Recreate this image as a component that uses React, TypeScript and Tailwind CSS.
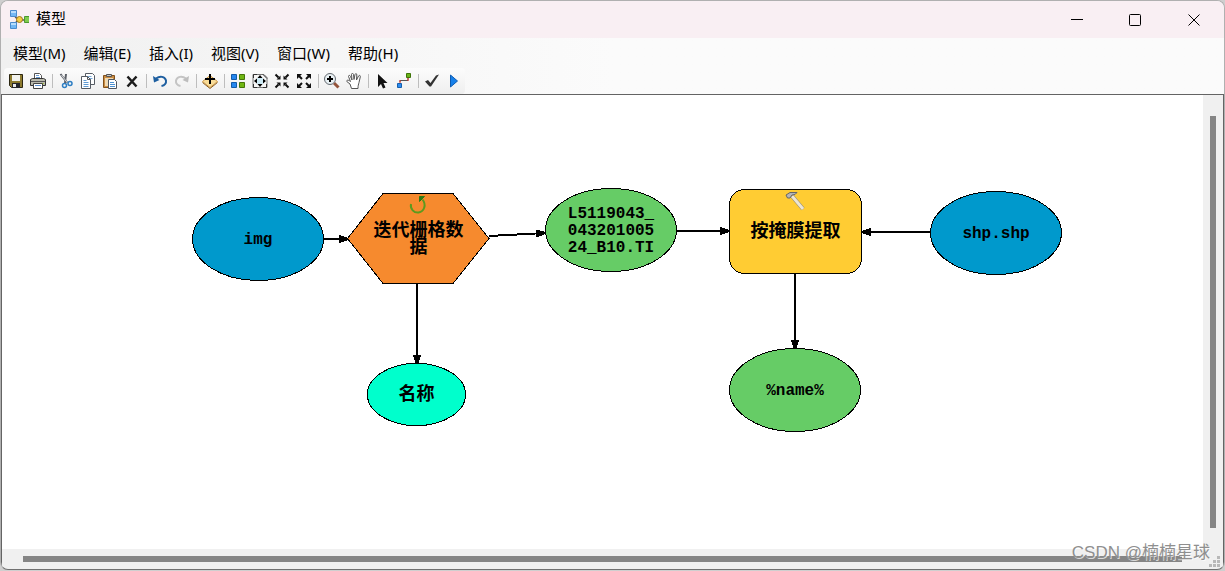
import React from "react";

const menus = ["模型(M)", "编辑(E)", "插入(I)", "视图(V)", "窗口(W)", "帮助(H)"];

const tools: { label: string; art: React.ReactNode }[][] = [
  [
    {
      label: "保存",
      art: (
        <>
          <path d="M1.500 1.500h13v13h-11l-2-2z" fill="#8c7a2e" stroke="#2b2612" />
          <path d="M4 2h8v6H4z" fill="#f3f3ee" />
          <path d="M4 10h8v5H4z" fill="#26262a" />
          <path d="M5 11h3v3H5z" fill="#e8e8e8" />
        </>
      ),
    },
    {
      label: "打印",
      art: (
        <>
          <path d="M4.500 6V.5h5l2 2V6" fill="#fff" stroke="#555" />
          <path d="M6 2.500h3M6 4.500h4" stroke="#6b9bd0" />
          <path d="M.5 6.500l2-1h11l2 1v6H.5z" fill="#b9b9ac" stroke="#333" />
          <path d="M1 8.500h14" stroke="#555" />
          <path d="M12 10.500h2" stroke="#a6c83a" />
          <path d="M3.500 10.500h9v5h-9z" fill="#fff" stroke="#444" />
          <path d="M5 12.500h6" stroke="#5a8fd0" />
        </>
      ),
    },
  ],
  [
    {
      label: "剪切",
      art: (
        <>
          <path d="M2.500 1l7 9M8 1l-1 9" stroke="#5b5f66" strokeWidth="2" />
          <path d="M3.500 2l6 8" stroke="#d5d8dc" />
          <circle cx="6.500" cy="12.500" r="2" fill="none" stroke="#2f7fc4" strokeWidth="1.500" />
          <circle cx="12" cy="10.500" r="2" fill="none" stroke="#2f7fc4" strokeWidth="1.500" />
        </>
      ),
    },
    {
      label: "复制",
      art: (
        <>
          <path d="M5.500.500h7l2 2v9h-9z" fill="#fff" stroke="#555b63" />
          <path d="M7.500 3.500h4M7.500 5.500h5" stroke="#79a9d8" />
          <path d="M1.500 3.500h6l3 3v9h-9z" fill="#fff" stroke="#555b63" />
          <path d="M7.500 3.500v3h3" fill="none" stroke="#555b63" />
          <path d="M3.500 7.500h3M3.500 9.500h5M3.500 11.500h5M3.500 13.500h5" stroke="#5f9bd4" />
        </>
      ),
    },
    {
      label: "粘贴",
      art: (
        <>
          <path d="M1.500 2.500h11v12h-11z" fill="#c98c42" stroke="#80501b" />
          <path d="M4.500 1.500h5v2h-5z" fill="#c9c9c9" stroke="#555" />
          <path d="M3 5h8v8H3z" fill="#eed9b3" />
          <path d="M6.500 6.500h6l2 2v7h-8z" fill="#fff" stroke="#4e5660" />
          <path d="M8 9.500h4M8 11.500h5M8 13.500h5" stroke="#4d91d2" />
        </>
      ),
    },
    {
      label: "删除",
      art: <path d="M3.500 3.500l9 10M12.500 3.500l-9 10" stroke="#1c1c1c" strokeWidth="2.500" />,
    },
  ],
  [
    {
      label: "撤消",
      art: (
        <>
          <path d="M4 5.500c4-3 9-2 10 2 .5 3-1.500 5-4.500 5.500" fill="none" stroke="#1e5fa0" strokeWidth="2" />
          <path d="M1 3l1 6.500 5.500-2.500z" fill="#1e5fa0" />
        </>
      ),
    },
    {
      label: "恢复",
      art: (
        <>
          <path d="M12 5.500c-4-3-9-2-10 2-.5 3 1.500 5 4.500 5.500" fill="none" stroke="#c4c4c4" strokeWidth="2" />
          <path d="M15 3l-1 6.500-5.500-2.500z" fill="#bdbdbd" />
        </>
      ),
    },
  ],
  [
    {
      label: "添加数据",
      art: (
        <>
          <path d="M.500 8.500L8 2.500l7.500 6L8 14.500z" fill="#f8dc98" stroke="#d09a48" />
          <path d="M.500 9.500l7.500 6 7.500-6" fill="none" stroke="#8c6226" />
          <path d="M8 1v10M3 6h10" stroke="#000" strokeWidth="2" />
        </>
      ),
    },
  ],
  [
    {
      label: "自动布局",
      art: (
        <>
          <path d="M1.500 1.500h5v5h-5zM1.500 9.500h5v5h-5z" fill="#2587ee" stroke="#145aa8" />
          <path d="M9.500 1.500h5v5h-5zM9.500 9.500h5v5h-5z" fill="#70b613" stroke="#447509" />
        </>
      ),
    },
    {
      label: "全图",
      art: (
        <>
          <path d="M1 1.500h11l3 3v10H1z" fill="#f7f7f7" stroke="#777" />
          <path d="M1.500 5V1.500H5M11 1.500l4 4M1.500 11v3.500H5M14.500 11v3.500H11" fill="none" stroke="#333" />
          <path d="M5 5h6v6H5z" fill="#cdeaf5" />
          <path d="M8 2l2.500 3h-5zM8 14l2.500-3h-5zM2 8l3-2.500v5zM14 8l-3-2.500v5z" fill="#000" />
        </>
      ),
    },
    {
      label: "固定比例缩小",
      art: (
        <>
          <path d="M1.500 1.500l3 3M14.500 1.500l-3 3M1.500 14.500l3-3M14.500 14.500l-3-3" stroke="#111" strokeWidth="2" />
          <path d="M6.500 2.500v4h-4zM9.500 2.500v4h4zM6.500 13.500v-4h-4zM9.500 13.500v-4h4z" fill="#111" />
        </>
      ),
    },
    {
      label: "固定比例放大",
      art: (
        <>
          <path d="M3 3l3 3M13 3l-3 3M3 13l3-3M13 13l-3-3" stroke="#111" strokeWidth="2" />
          <path d="M1 1h5L1 6zM15 1h-5l5 5zM1 15h5l-5-5zM15 15h-5l5-5z" fill="#111" />
        </>
      ),
    },
  ],
  [
    {
      label: "放大",
      art: (
        <>
          <path d="M10 10l4.500 4.500" stroke="#94543b" strokeWidth="3" />
          <circle cx="6" cy="6" r="5.500" fill="#e9f1f4" stroke="#646a70" />
          <path d="M6 3v6M3 6h6" stroke="#000" strokeWidth="2" />
        </>
      ),
    },
    {
      label: "平移",
      art: (
        <path
          d="M5.500 15.500L4 11 .800 8.500C.500 7 2 6.500 4.500 8.500L2.500 3.500c0-1.500 1.500-1.500 2 0L6 7 5.500 1.500c0-1.500 1.800-1.500 2 0L8 6.500l1-5c.5-1.500 2-1 1.800.500L10.500 7l2-4c.8-1.200 2.200-.5 1.800.800L13 9.500c-.5 2-1 3-1 6z"
          fill="#fff"
          stroke="#555"
        />
      ),
    },
  ],
  [
    {
      label: "选择",
      art: <path d="M4 1v13l3-3 2 4.500 2.500-1L9.500 10h4z" fill="#111" />,
    },
    {
      label: "连接",
      art: (
        <>
          <path d="M4 9V7.500h8V5" fill="none" stroke="#555" />
          <path d="M4 7v3M12 5v3" stroke="#e33022" />
          <path d="M10.500.500h4v4h-4z" fill="#6ab418" stroke="#3d7308" />
          <path d="M1.500 10.500h4v4h-4z" fill="#2c8cf0" stroke="#165fac" />
        </>
      ),
    },
  ],
  [
    {
      label: "验证整个模型",
      art: <path d="M1 8.500l3-1.500 2.500 3L12 2.500l3-1L7 13.500H5.500z" fill="#333" />,
    },
    {
      label: "运行",
      art: <path d="M4.500 2v12l7-6z" fill="#1680ea" stroke="#0e5cb2" />,
    },
  ],
];

function ModelIcon() {
  return (
    <svg width="20" height="20" viewBox="0 0 20 20">
      <path d="M4 4l5 6-5 6M9 10h8" fill="none" stroke="#555" strokeWidth="1.500" />
      <path d="M1.500.500h6v6h-6zM1.500 12.500h6v6h-6z" fill="#74b8f4" stroke="#4b8bcc" />
      <path d="M2 1h5v2H2zM2 13h5v2H2z" fill="#b8dcfb" />
      <circle cx="10.500" cy="9.500" r="3" fill="#f5cd41" stroke="#9b7620" />
      <path d="M15.500 6.500h5v6h-5z" fill="#7fcb4e" stroke="#4b9730" />
    </svg>
  );
}

function Oval({ fill }: { fill: string }) {
  return (
    <svg className="absolute inset-0 h-full w-full" viewBox="0 0 132 84" preserveAspectRatio="none" shapeRendering="crispEdges">
      <ellipse cx="66" cy="42" rx="65.500" ry="41.500" fill={fill} stroke="#000" vectorEffect="non-scaling-stroke" />
    </svg>
  );
}

function Hexagon() {
  return (
    <svg className="absolute inset-0 h-full w-full" viewBox="0 0 143 91" shapeRendering="crispEdges">
      <path d="M36 .500h70l36 45-36 45H36L.500 45.500z" fill="#f68a2e" stroke="#000" />
      <g shapeRendering="auto">
        <path d="M64 11c-1 5 3 9 7.500 8.500 6-1 8-8 4-13" fill="none" stroke="#5d9a1e" strokeWidth="2" />
        <path d="M72.500 3.500h5l-5 5z" fill="#2f7a12" stroke="#2f7a12" />
      </g>
    </svg>
  );
}

function ToolBox() {
  return (
    <svg className="absolute inset-0 h-full w-full" viewBox="0 0 133 85">
      <rect x=".5" y=".5" width="132" height="84" rx="15" fill="#ffcc33" stroke="#000" shapeRendering="crispEdges" />
      <path d="M63 7l11 13" stroke="#8b8375" strokeWidth="4" />
      <path d="M63 7l11 13" stroke="#eee6d2" strokeWidth="3" />
      <path d="M58.500 9l-1.500-3 4-2.500h7l-2 2-3 .5-2 3z" fill="#b5b5b5" stroke="#666" />
    </svg>
  );
}

const nodes = [
  { text: "img", place: "left-[190px] top-[102px] h-[84px] w-[132px] text-[16px]", shape: <Oval fill="#0099cc" /> },
  { text: "迭代栅格数据", place: "left-[345px] top-[98px] h-[91px] w-[143px] text-[18px]", shape: <Hexagon /> },
  { text: "L5119043_04320100524_B10.TI", place: "left-[543px] top-[93px] h-[84px] w-[132px] text-[16px]", shape: <Oval fill="#66cc66" /> },
  { text: "按掩膜提取", place: "left-[727px] top-[94px] h-[85px] w-[133px] text-[18px]", shape: <ToolBox /> },
  { text: "shp.shp", place: "left-[928px] top-[96px] h-[84px] w-[132px] text-[16px]", shape: <Oval fill="#0099cc" /> },
  { text: "名称", place: "left-[365px] top-[268px] h-[63px] w-[99px] text-[18px]", shape: <Oval fill="#00ffcc" /> },
  { text: "%name%", place: "left-[727px] top-[253px] h-[84px] w-[132px] text-[16px]", shape: <Oval fill="#66cc66" /> },
];

const edges = [
  "M321 144L346 144",
  "M487 141L543 138",
  "M674 136L727 136",
  "M929 137L860 137",
  "M415 188L415 269",
  "M793 178L793 254",
];

function Edges() {
  return (
    <svg className="absolute left-0 top-0" width="1100" height="400" shapeRendering="crispEdges">
      <defs>
        <marker id="arrow" markerUnits="userSpaceOnUse" markerWidth="10" markerHeight="8" refX="9" refY="4" orient="auto">
          <path d="M0 0l10 3v2L0 8z" />
        </marker>
      </defs>
      {edges.map((d) => (
        <path key={d} d={d} stroke="#000" strokeWidth="2" markerEnd="url(#arrow)" />
      ))}
    </svg>
  );
}

export default function App() {
  return (
    <div className="h-screen bg-[#cfcfcf] pb-px font-['Noto_Sans','Noto_Sans_CJK_SC',sans-serif] text-black">
      <div className="relative flex h-full flex-col overflow-hidden rounded-lg border border-[#b0b0b0] border-b-[#707070] bg-[#f0f0f0]">
        <header className="flex h-[37px] shrink-0 items-center bg-[#f9eff3] pl-2">
          <ModelIcon />
          <h1 className="ml-[7px] pb-[3px] text-[15px] leading-5">模型</h1>
          <div className="ml-auto flex">
            <button aria-label="最小化" className="flex h-9 w-[58px] items-center justify-center">
              <svg width="12" height="12" stroke="#000"><path d="M0 5.500h12" /></svg>
            </button>
            <button aria-label="最大化" className="flex h-9 w-[58px] items-center justify-center">
              <svg width="12" height="12" fill="none" stroke="#000"><rect x=".5" y=".5" width="11" height="11" rx="1" /></svg>
            </button>
            <button aria-label="关闭" className="flex h-9 w-[60px] items-center justify-center">
              <svg width="12" height="12" stroke="#000"><path d="M.5.5l11 11M11.500.5l-11 11" /></svg>
            </button>
          </div>
        </header>

        <div className="shrink-0 bg-linear-to-r from-[#f0f0f0] to-[#fbfbfb] to-50%">
          <nav className="flex h-[30px] items-center pl-[3px]">
            {menus.map((m) => (
              <button key={m} className="px-[9px] pb-px text-[15px] leading-5">
                {m}
              </button>
            ))}
          </nav>
          <div className="flex h-[26px] pl-[3px]">
            <div role="toolbar" className="flex items-center rounded-sm bg-linear-to-b from-[#fcfcfc] to-[#efefef] pl-px">
              {tools.map((group, i) => (
                <React.Fragment key={i}>
                  {i > 0 && (
                    <span className="flex w-[6px] justify-center">
                      <span className="h-[14px] w-px bg-[#bdbdbd]" />
                    </span>
                  )}
                  {group.map(({ label, art }) => (
                    <button key={label} aria-label={label} className="flex h-6 w-[22px] items-center justify-center">
                      <svg width="16" height="16" viewBox="0 0 16 16">
                        {art}
                      </svg>
                    </button>
                  ))}
                </React.Fragment>
              ))}
            </div>
          </div>
        </div>

        <div className="flex min-h-0 flex-1 flex-col border border-b-0 border-[#646464]">
          <div className="flex min-h-0 flex-1">
            <main className="relative flex-1 overflow-hidden bg-white">
              <Edges />
              {nodes.map(({ text, place, shape }) => (
                <div key={text} className={`absolute flex items-center justify-center pt-[2px] ${place}`}>
                  {shape}
                  <span className="relative w-[92px] text-center font-['Liberation_Mono','Noto_Sans_CJK_SC',monospace] leading-[17px] font-bold break-all">
                    {text}
                  </span>
                </div>
              ))}
            </main>
            <div className="flex w-5 justify-center bg-[#f0f0f0] py-[21px]">
              <div className="w-[6px] bg-[#858585]" />
            </div>
          </div>
          <div className="flex h-5 shrink-0 items-center">
            <div className="flex-1 px-[21px]">
              <div className="h-[6px] bg-[#858585]" />
            </div>
            <svg width="20" height="20" fill="#b8b8b8">
              <path d="M14 7h3v3h-3zM14 11h3v3h-3zM10 11h3v3h-3zM14 15h3v3h-3zM10 15h3v3h-3zM6 15h3v3H6z" />
            </svg>
          </div>
        </div>

        <p className="absolute right-[14px] bottom-1 font-['Liberation_Sans','Noto_Sans_CJK_SC',sans-serif] text-[17px] leading-6 text-[#8f8f8f] [text-shadow:1px_1px_0_#ffffffb0]">
          CSDN @楠楠星球
        </p>
      </div>
    </div>
  );
}
